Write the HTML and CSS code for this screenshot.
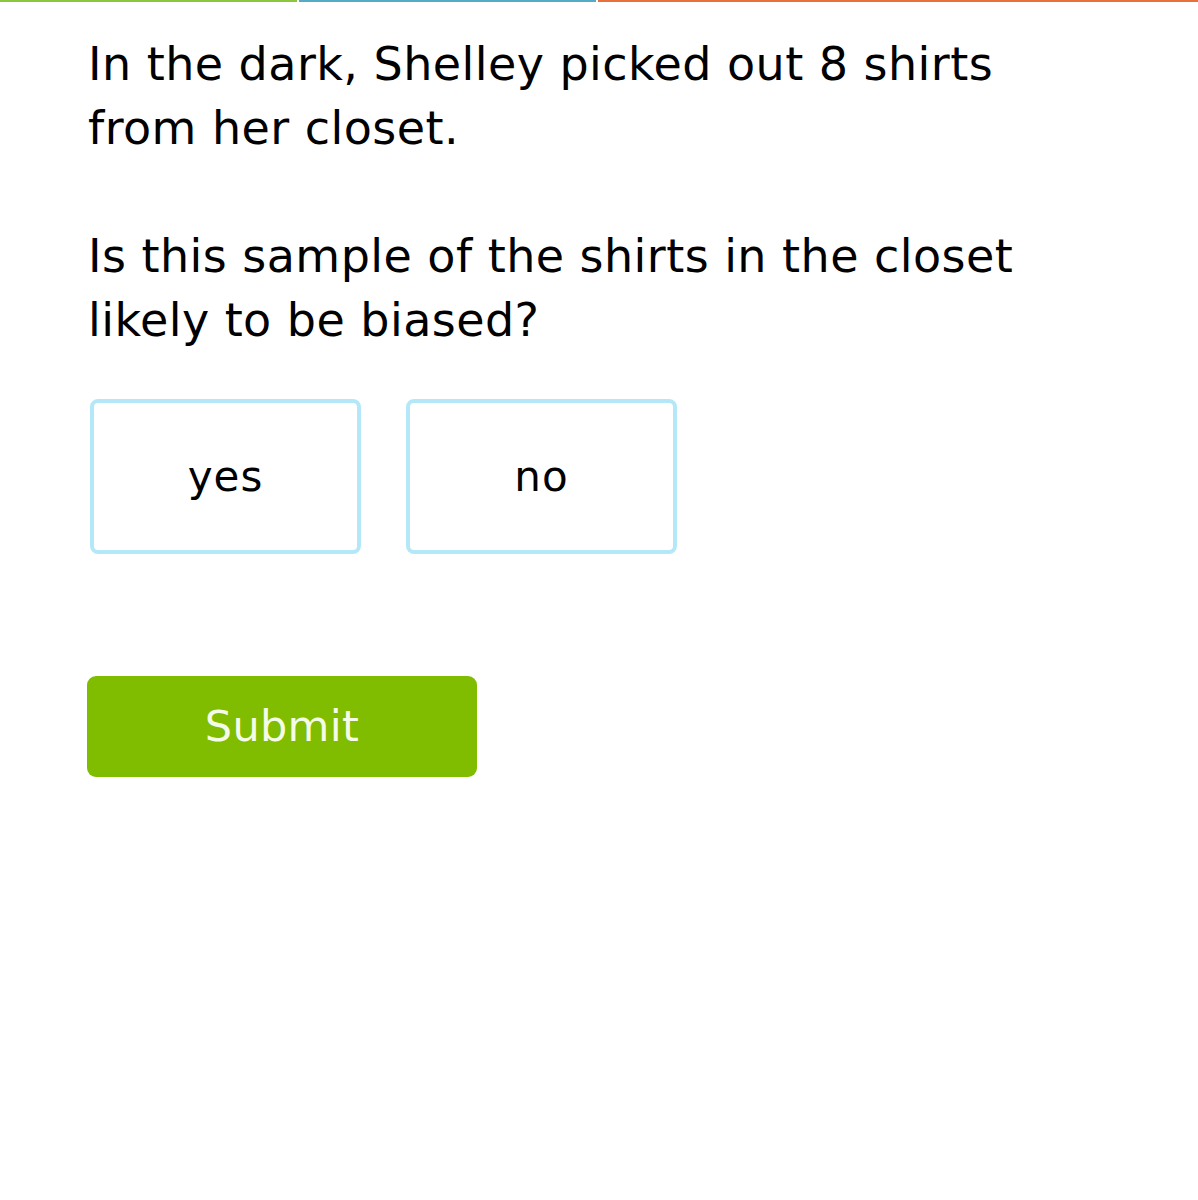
FILE: index.html
```html
<!DOCTYPE html>
<html>
<head>
<meta charset="utf-8">
<link rel="stylesheet" href="styles.css">
</head>
<body>
<div class="topbar">
  <div class="seg seg-green"></div>
  <div class="seg seg-blue"></div>
  <div class="seg seg-orange"></div>
</div>
<main class="content">
  <p class="question">In the dark, Shelley picked out 8 shirts<br>from her closet.</p>
  <p class="question q2">Is this sample of the shirts in the closet<br>likely to be biased?</p>
  <div class="choices">
    <div class="choice">yes</div>
    <div class="choice">no</div>
  </div>
  <button class="submit">Submit</button>
</main>
</body>
</html>
```
FILE: styles.css
```css
html, body {
  margin: 0;
  padding: 0;
  background: #ffffff;
}
body {
  font-family: "DejaVu Sans", Verdana, sans-serif;
  color: #000;
}
.topbar {
  display: flex;
  gap: 2px;
  height: 2px;
}
.seg { height: 2px; }
.seg-green { width: 297px; background: #8cc63e; }
.seg-blue { width: 297px; background: #55aac6; }
.seg-orange { flex: 1; background: #e8703c; }
.content {
  padding: 30px 0 0 88px;
}
.question {
  margin: 0;
  font-size: 46px;
  line-height: 64px;
  letter-spacing: 0.45px;
}
.q2 {
  margin-top: 64px;
}
.choices {
  display: flex;
  gap: 45px;
  margin-top: 47px;
  margin-left: 2px;
}
.choice {
  box-sizing: border-box;
  width: 271px;
  height: 155px;
  border: 4px solid #b4e8f8;
  border-radius: 8px;
  display: flex;
  align-items: center;
  justify-content: center;
  font-size: 42px;
  letter-spacing: 1px;
  color: #000;
  padding-bottom: 0;
}
.submit {
  display: block;
  margin-top: 122px;
  margin-left: -1px;
  width: 390px;
  height: 101px;
  border: none;
  border-radius: 9px;
  background: #80bc00;
  color: #f4fbe6;
  font-family: "DejaVu Sans", Verdana, sans-serif;
  font-size: 43px;
  letter-spacing: 0.3px;
  padding: 0 0 2px 0;
}
```
